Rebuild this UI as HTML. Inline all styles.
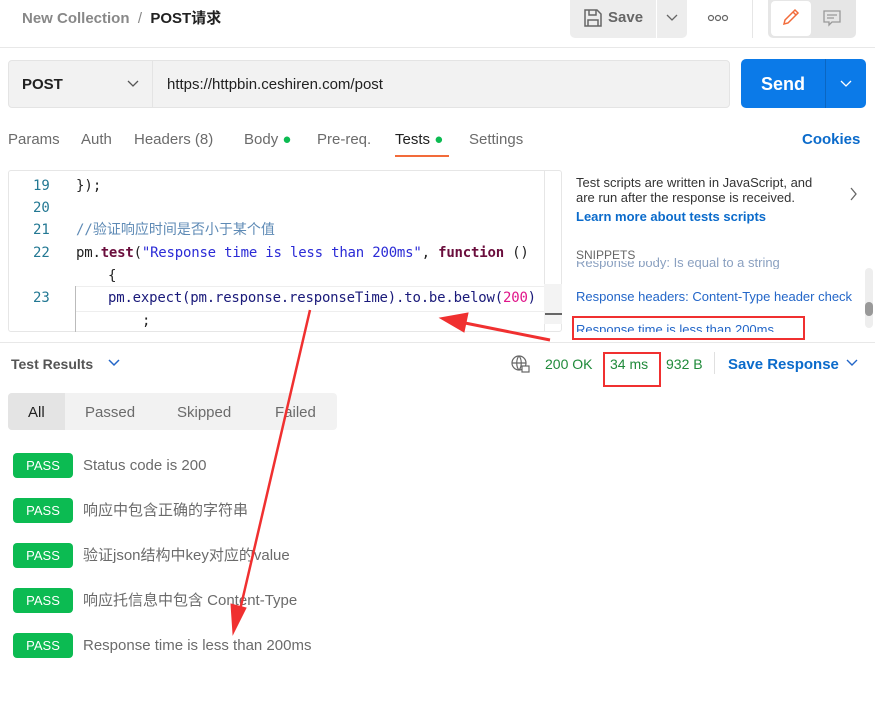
<!DOCTYPE html><html><head><meta charset="utf-8"><style>
body{margin:0;width:875px;height:717px;overflow:hidden;background:#fff;font-family:"Liberation Sans","Noto Sans CJK SC",sans-serif;position:relative;color:#212121}
.a{position:absolute;white-space:nowrap}
.mono{font-family:"DejaVu Sans Mono","Noto Sans CJK SC",monospace;font-size:14px;line-height:18px}
.pass{position:absolute;left:13px;width:60px;height:25px;background:#0cbb52;color:#fff;border-radius:4px;font-size:13px;text-align:center;line-height:25px}
.pt{position:absolute;left:83px;font-size:15px;color:#6b6b6b;line-height:20px;height:20px}
</style></head><body>
<div class="a" style="left:22px;top:10px;font-size:15px;font-weight:bold;color:#888;line-height:18px">New Collection <span style="color:#888;font-weight:normal">&nbsp;/&nbsp;</span> <span style="color:#212121">POST请求</span></div>
<div class="a" style="left:570px;top:0;width:86px;height:38px;background:#ededed;border-radius:0 0 0 5px"></div>
<div class="a" style="left:657px;top:0;width:30px;height:38px;background:#ededed;border-radius:0 0 5px 0"></div>
<svg class="a" style="left:583px;top:8px" width="20" height="20" viewBox="0 0 20 20" fill="none" stroke="#666" stroke-width="1.5"><path d="M2 2h12l4 4v12H2z"/><path d="M6 2v5h7V2M5 18v-6h10v6"/></svg>
<div class="a" style="left:608px;top:9px;font-size:15px;font-weight:bold;color:#666">Save</div>
<svg class="a" style="left:665px;top:13px" width="14" height="10"><path d="M2 2l5 5 5-5" stroke="#666" fill="none" stroke-width="1.3"/></svg>
<svg class="a" style="left:707px;top:14px" width="22" height="8"><g fill="none" stroke="#666" stroke-width="1.2"><circle cx="4" cy="4" r="2.5"/><circle cx="11" cy="4" r="2.5"/><circle cx="18" cy="4" r="2.5"/></g></svg>
<div class="a" style="left:752px;top:0;width:1px;height:38px;background:#e6e6e6"></div>
<div class="a" style="left:768px;top:0;width:88px;height:38px;background:#e6e6e6;border-radius:0 0 5px 5px"></div>
<div class="a" style="left:771px;top:1px;width:40px;height:35px;background:#fff;border-radius:4px"></div>
<svg class="a" style="left:781px;top:7px" width="20" height="20" viewBox="0 0 20 20" fill="none" stroke="#f26b3a" stroke-width="1.5"><path d="M3 17l1-4L14 3l3 3L7 16z"/><path d="M12 5l3 3"/></svg>
<svg class="a" style="left:822px;top:9px" width="20" height="18" viewBox="0 0 20 18" fill="none" stroke="#999" stroke-width="1.3"><path d="M2 2h16v11H10l-3 3v-3H2z"/><path d="M5 6h10M5 9h7"/></svg>
<div class="a" style="left:0;top:47px;width:875px;height:1px;background:#e8e8e8"></div>
<div class="a" style="left:8px;top:60px;width:722px;height:48px;background:#f2f2f2;border:1px solid #e4e4e4;border-radius:4px;box-sizing:border-box"></div>
<div class="a" style="left:152px;top:60px;width:1px;height:48px;background:#e4e4e4"></div>
<div class="a" style="left:22px;top:76px;font-size:15px;font-weight:bold">POST</div>
<svg class="a" style="left:126px;top:79px" width="14" height="10"><path d="M2 2l5 5 5-5" stroke="#555" fill="none" stroke-width="1.3"/></svg>
<div class="a" style="left:167px;top:76px;font-size:15px">https://httpbin.ceshiren.com/post</div>
<div class="a" style="left:741px;top:59px;width:125px;height:49px;background:#0b7ae8;border-radius:5px"></div>
<div class="a" style="left:825px;top:59px;width:1px;height:49px;background:#0a66c2"></div>
<div class="a" style="left:761px;top:74px;font-size:18px;font-weight:bold;color:#fff">Send</div>
<svg class="a" style="left:839px;top:79px" width="14" height="10"><path d="M2 2l5 5 5-5" stroke="#fff" fill="none" stroke-width="1.3"/></svg>
<div class="a" style="left:8px;top:131px;font-size:15px;color:#6b6b6b">Params</div>
<div class="a" style="left:81px;top:131px;font-size:15px;color:#6b6b6b">Auth</div>
<div class="a" style="left:134px;top:131px;font-size:15px;color:#6b6b6b">Headers <span>(8)</span></div>
<div class="a" style="left:244px;top:131px;font-size:15px;color:#6b6b6b">Body <span style="color:#0cbb52">●</span></div>
<div class="a" style="left:317px;top:131px;font-size:15px;color:#6b6b6b">Pre-req.</div>
<div class="a" style="left:395px;top:131px;font-size:15px;color:#212121">Tests <span style="color:#0cbb52">●</span></div>
<div class="a" style="left:395px;top:155px;width:54px;height:2px;background:#f26b3a"></div>
<div class="a" style="left:469px;top:131px;font-size:15px;color:#6b6b6b">Settings</div>
<div class="a" style="left:802px;top:131px;font-size:15px;font-weight:bold;color:#0b6bcb">Cookies</div>
<div class="a" style="left:8px;top:170px;width:554px;height:162px;border:1px solid #e6e6e6;border-radius:3px;box-sizing:border-box"></div>
<div class="a" style="left:544px;top:171px;width:1px;height:160px;background:#e6e6e6"></div>
<div class="a" style="left:544px;top:284px;width:18px;height:40px;background:#f3f3f3"></div>
<div class="a" style="left:545px;top:313px;width:17px;height:2px;background:#666"></div>
<div class="a mono" style="left:33px;top:177px;color:#237893">19</div>
<div class="a mono" style="left:33px;top:199px;color:#237893">20</div>
<div class="a mono" style="left:33px;top:221px;color:#237893">21</div>
<div class="a mono" style="left:33px;top:244px;color:#237893">22</div>
<div class="a mono" style="left:33px;top:289px;color:#237893">23</div>
<div class="a mono" style="left:76px;top:177px">});</div>
<div class="a mono" style="left:76px;top:221px;color:#5e8ab5">//验证响应时间是否小于某个值</div>
<div class="a mono" style="left:76px;top:244px;letter-spacing:-0.2px">pm.<b style="color:#6a0d3c">test</b>(<span style="color:#2b2bd6">"Response time is less than 200ms"</span>, <b style="color:#6a0d3c">function</b> ()</div>
<div class="a mono" style="left:108px;top:267px">{</div>
<div class="a" style="left:75px;top:286px;width:1px;height:46px;background:#bbb"></div>
<div class="a" style="left:76px;top:286px;width:468px;height:24px;border-top:1px solid #eee;border-bottom:1px solid #eee"></div>
<div class="a mono" style="left:108px;top:289px;color:#1a1a7a;letter-spacing:-0.2px">pm.expect(pm.response.responseTime).to.be.below(<span style="color:#e0168a">200</span>)</div>
<div class="a mono" style="left:142px;top:312px">;</div>
<div class="a" style="left:576px;top:175px;font-size:13px;line-height:15px;color:#333">Test scripts are written in JavaScript, and<br>are run after the response is received.</div>
<svg class="a" style="left:849px;top:187px" width="10" height="14"><path d="M2 1l5 6-5 6" stroke="#666" fill="none" stroke-width="1.3"/></svg>
<div class="a" style="left:576px;top:209px;font-size:13px;font-weight:bold;color:#0b6bcb">Learn more about tests scripts</div>
<div class="a" style="left:576px;top:255px;font-size:13px;color:#8aa0c0;overflow:hidden;height:14px">Response body: Is equal to a string</div>
<div class="a" style="left:576px;top:248px;font-size:12px;color:#666;background:#fff;height:13px;width:80px">SNIPPETS</div>
<div class="a" style="left:576px;top:289px;font-size:13px;color:#2366c8">Response headers: Content-Type header check</div>
<div class="a" style="left:576px;top:322px;font-size:13px;color:#2366c8;height:10px;overflow:hidden">Response time is less than 200ms</div>
<div class="a" style="left:865px;top:268px;width:8px;height:60px;background:#eee;border-radius:4px"></div>
<div class="a" style="left:865px;top:302px;width:8px;height:14px;background:#999;border-radius:4px"></div>
<div class="a" style="left:572px;top:316px;width:229px;height:20px;border:2px solid #f03030"></div>
<div class="a" style="left:0;top:342px;width:875px;height:1px;background:#e8e8e8"></div>
<div class="a" style="left:11px;top:356px;font-size:14px;font-weight:bold;color:#555">Test Results</div>
<svg class="a" style="left:107px;top:358px" width="14" height="10"><path d="M2 2l5 5 5-5" stroke="#2366c8" fill="none" stroke-width="1.5"/></svg>
<svg class="a" style="left:510px;top:354px" width="20" height="20" viewBox="0 0 20 20" fill="none" stroke="#666" stroke-width="1.2"><circle cx="9" cy="9" r="7"/><path d="M2 9h14M9 2c-3 3-3 11 0 14M9 2c3 3 3 11 0 14"/><rect x="12" y="12" width="7" height="6" fill="#fff"/></svg>
<div class="a" style="left:545px;top:356px;font-size:14px;color:#1f8a3a">200 OK</div>
<div class="a" style="left:610px;top:356px;font-size:14px;color:#1f8a3a">34 ms</div>
<div class="a" style="left:603px;top:352px;width:54px;height:31px;border:2px solid #f03030"></div>
<div class="a" style="left:666px;top:356px;font-size:14px;color:#1f8a3a">932 B</div>
<div class="a" style="left:714px;top:352px;width:1px;height:22px;background:#e0e0e0"></div>
<div class="a" style="left:728px;top:356px;font-size:15px;font-weight:bold;color:#0b6bcb">Save Response</div>
<svg class="a" style="left:845px;top:358px" width="14" height="10"><path d="M2 2l5 5 5-5" stroke="#2366c8" fill="none" stroke-width="1.4"/></svg>
<div class="a" style="left:8px;top:393px;width:329px;height:37px;background:#f2f2f2;border-radius:4px"></div>
<div class="a" style="left:8px;top:393px;width:57px;height:37px;background:#e4e4e4;border-radius:4px 0 0 4px"></div>
<div class="a" style="left:28px;top:404px;font-size:15px">All</div>
<div class="a" style="left:85px;top:404px;font-size:15px;color:#6b6b6b">Passed</div>
<div class="a" style="left:177px;top:404px;font-size:15px;color:#6b6b6b">Skipped</div>
<div class="a" style="left:275px;top:404px;font-size:15px;color:#6b6b6b">Failed</div>
<div class="pass" style="top:453px">PASS</div><div class="pt a" style="top:456px">Status code is 200</div>
<div class="pass" style="top:498px">PASS</div><div class="pt a" style="top:501px">响应中包含正确的字符串</div>
<div class="pass" style="top:543px">PASS</div><div class="pt a" style="top:546px">验证json结构中key对应的value</div>
<div class="pass" style="top:588px">PASS</div><div class="pt a" style="top:591px">响应托信息中包含 Content-Type</div>
<div class="pass" style="top:633px">PASS</div><div class="pt a" style="top:636px">Response time is less than 200ms</div>
<svg class="a" style="left:0;top:0" width="875" height="717"><g fill="#f03030" stroke="#f03030">
<path d="M310 310L240 610" stroke-width="2.5"/><path d="M233 634L231 604L246 608z"/>
<path d="M550 340L465 323" stroke-width="3"/><path d="M440 318L468 313L464 332z"/></g></svg>
</body></html>
